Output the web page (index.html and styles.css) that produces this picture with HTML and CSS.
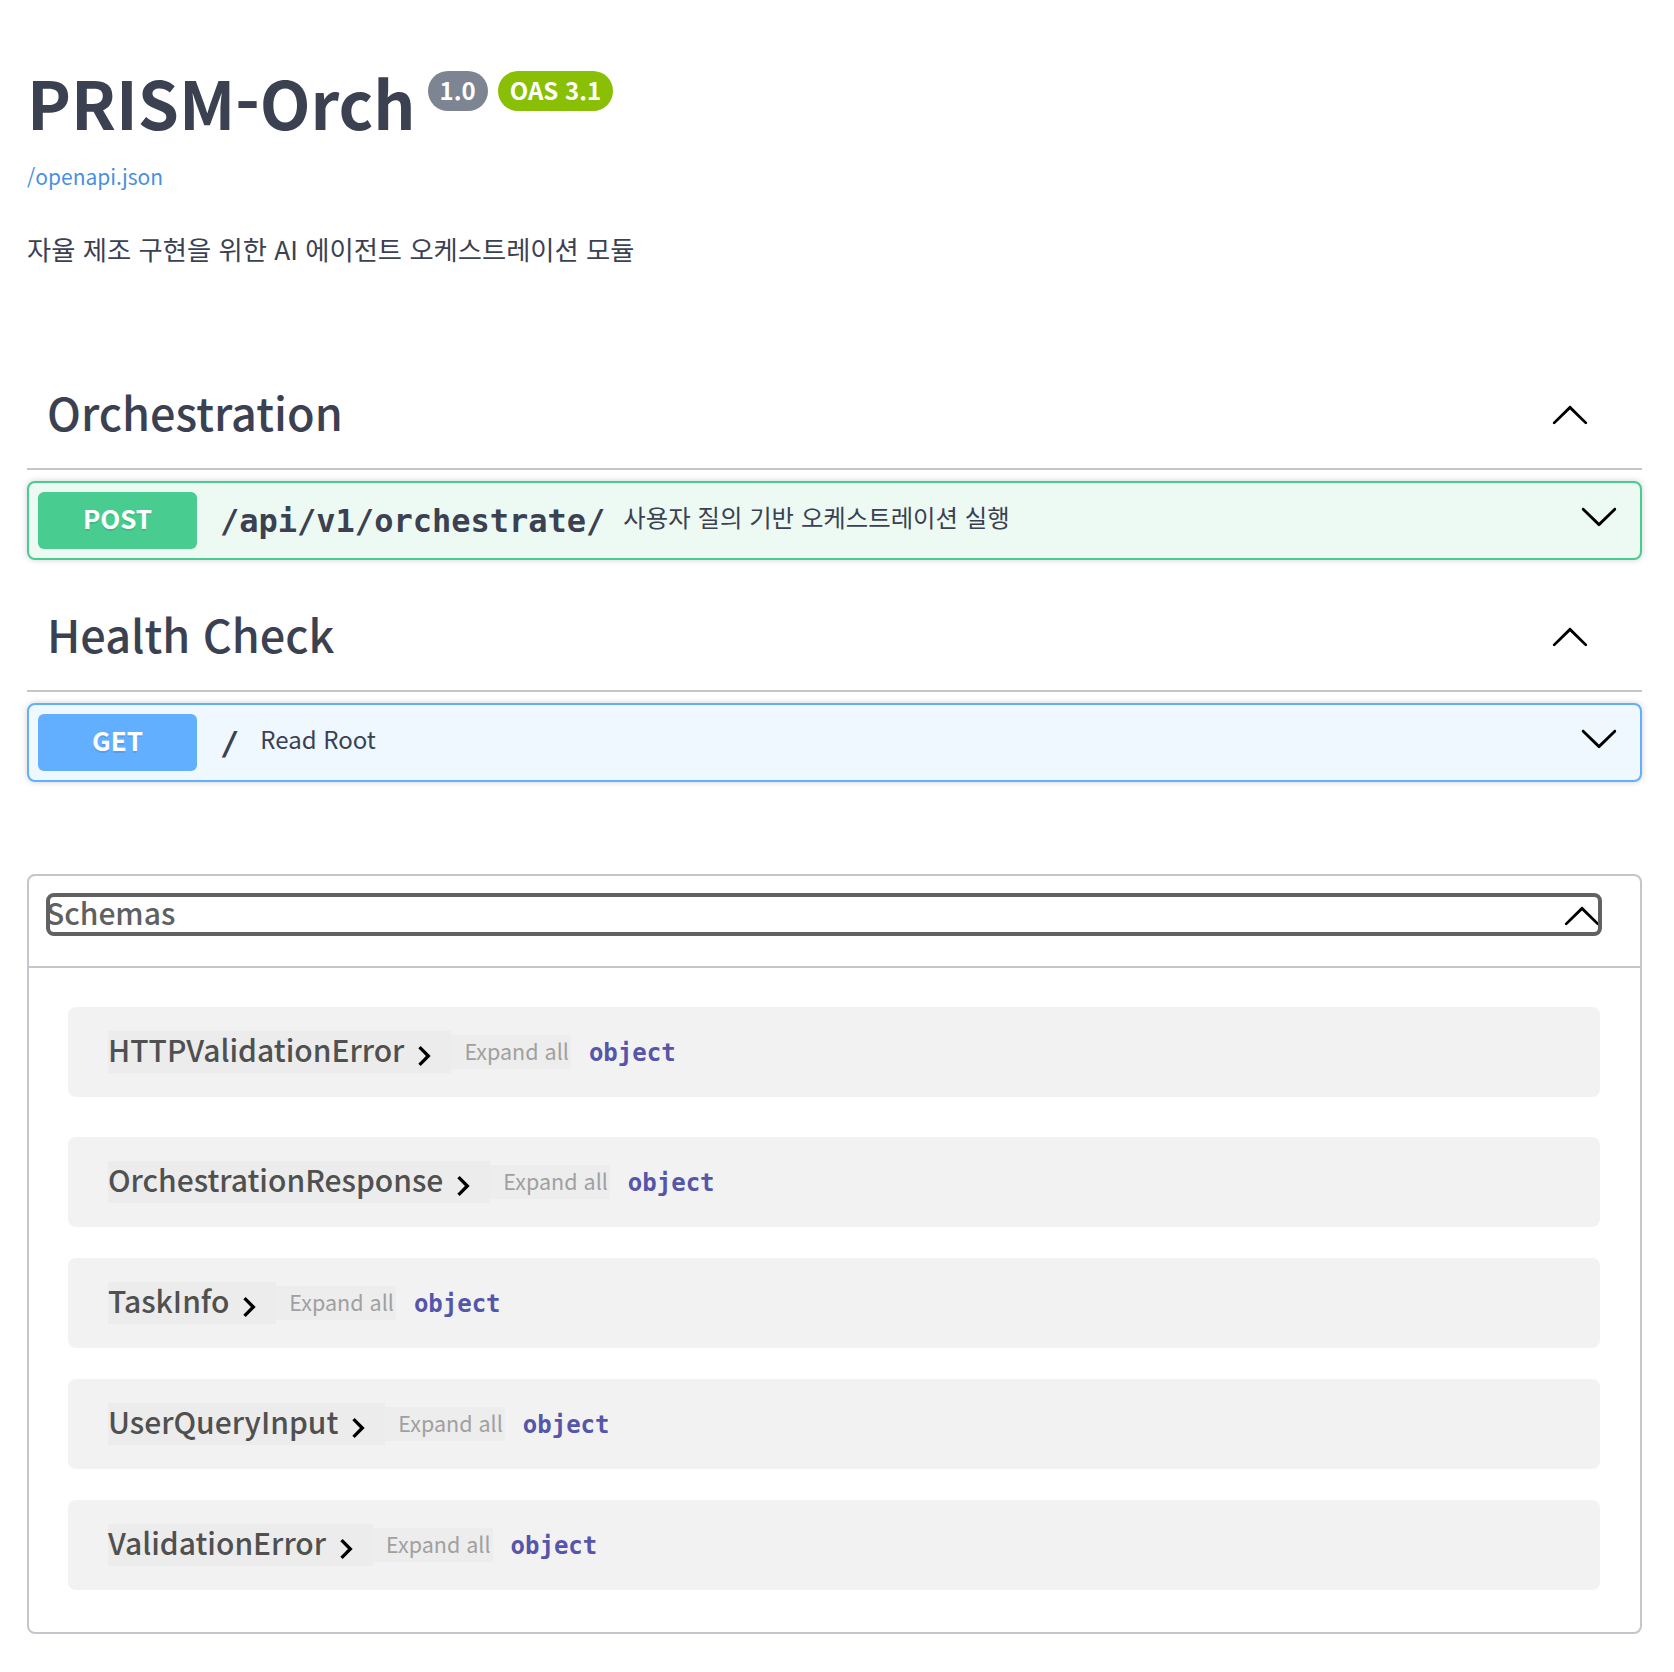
FILE: index.html
```html
<!DOCTYPE html>
<html lang="ko">
<head>
<meta charset="utf-8">
<title>PRISM-Orch</title>
<link rel="stylesheet" href="styles.css">
</head>
<body>
<div class="page">
  <section class="info">
    <div class="title-row">
      <h1 class="title">PRISM-Orch</h1>
      <span class="badge badge-version">1.0</span>
      <span class="badge badge-oas">OAS 3.1</span>
    </div>
    <a class="spec-link" href="#">/openapi.json</a>
    <p class="description">자율 제조 구현을 위한 AI 에이전트 오케스트레이션 모듈</p>
  </section>

  <div class="tags">
    <section class="tag-section">
      <div class="tag-header">
        <h3 class="tag-name">Orchestration</h3>
        <svg class="arrow" viewBox="0 0 20 20" width="40" height="40"><path d="M17.418 14.908c.272.268.709.268.979 0s.271-.701 0-.969l-7.908-7.83c-.27-.268-.707-.268-.979 0l-7.908 7.83c-.27.268-.27.701 0 .969.271.268.709.268.979 0L10 7.767l7.418 7.141z"/></svg>
      </div>
      <div class="opblock opblock-post">
        <span class="method method-post">POST</span>
        <span class="path">/api/v1/orchestrate/</span>
        <span class="summary summary-ko">사용자 질의 기반 오케스트레이션 실행</span>
        <svg class="arrow" viewBox="0 0 20 20" width="40" height="40"><path d="M17.418 6.109c.272-.268.709-.268.979 0s.271.701 0 .969l-7.908 7.83c-.27.268-.707.268-.979 0l-7.908-7.830c-.27-.268-.27-.701 0-.969.271-.268.709-.268.979 0L10 13.25l7.418-7.141z"/></svg>
      </div>
    </section>

    <section class="tag-section">
      <div class="tag-header">
        <h3 class="tag-name">Health Check</h3>
        <svg class="arrow" viewBox="0 0 20 20" width="40" height="40"><path d="M17.418 14.908c.272.268.709.268.979 0s.271-.701 0-.969l-7.908-7.83c-.27-.268-.707-.268-.979 0l-7.908 7.83c-.27.268-.27.701 0 .969.271.268.709.268.979 0L10 7.767l7.418 7.141z"/></svg>
      </div>
      <div class="opblock opblock-get">
        <span class="method method-get">GET</span>
        <span class="path">/</span>
        <span class="summary">Read Root</span>
        <svg class="arrow" viewBox="0 0 20 20" width="40" height="40"><path d="M17.418 6.109c.272-.268.709-.268.979 0s.271.701 0 .969l-7.908 7.83c-.27.268-.707.268-.979 0l-7.908-7.830c-.27-.268-.27-.701 0-.969.271-.268.709-.268.979 0L10 13.25l7.418-7.141z"/></svg>
      </div>
    </section>
  </div>

  <section class="models">
    <div class="models-header">
      <button class="models-toggle" type="button">
        <span class="models-label">Schemas</span>
        <svg class="arrow" viewBox="0 0 20 20" width="40" height="40"><path d="M17.418 14.908c.272.268.709.268.979 0s.271-.701 0-.969l-7.908-7.83c-.27-.268-.707-.268-.979 0l-7.908 7.83c-.27.268-.27.701 0 .969.271.268.709.268.979 0L10 7.767l7.418 7.141z"/></svg>
      </button>
    </div>
    <div class="models-list">
      <div class="model-box">
        <span class="model-title-btn"><span class="model-title">HTTPValidationError</span><svg class="model-toggle" viewBox="0 0 24 24" width="40" height="40"><path d="M10 6 8.59 7.41 13.17 12l-4.58 4.59L10 18l6-6z"/></svg></span>
        <span class="expand-btn">Expand all</span>
        <span class="prop-type">object</span>
      </div>
      <div class="model-box">
        <span class="model-title-btn"><span class="model-title">OrchestrationResponse</span><svg class="model-toggle" viewBox="0 0 24 24" width="40" height="40"><path d="M10 6 8.59 7.41 13.17 12l-4.58 4.59L10 18l6-6z"/></svg></span>
        <span class="expand-btn">Expand all</span>
        <span class="prop-type">object</span>
      </div>
      <div class="model-box">
        <span class="model-title-btn"><span class="model-title">TaskInfo</span><svg class="model-toggle" viewBox="0 0 24 24" width="40" height="40"><path d="M10 6 8.59 7.41 13.17 12l-4.58 4.59L10 18l6-6z"/></svg></span>
        <span class="expand-btn">Expand all</span>
        <span class="prop-type">object</span>
      </div>
      <div class="model-box">
        <span class="model-title-btn"><span class="model-title">UserQueryInput</span><svg class="model-toggle" viewBox="0 0 24 24" width="40" height="40"><path d="M10 6 8.59 7.41 13.17 12l-4.58 4.59L10 18l6-6z"/></svg></span>
        <span class="expand-btn">Expand all</span>
        <span class="prop-type">object</span>
      </div>
      <div class="model-box">
        <span class="model-title-btn"><span class="model-title">ValidationError</span><svg class="model-toggle" viewBox="0 0 24 24" width="40" height="40"><path d="M10 6 8.59 7.41 13.17 12l-4.58 4.59L10 18l6-6z"/></svg></span>
        <span class="expand-btn">Expand all</span>
        <span class="prop-type">object</span>
      </div>
    </div>
  </section>
</div>
</body>
</html>
```

FILE: styles.css
```css
* { box-sizing: border-box; }

html, body {
  margin: 0;
  padding: 0;
  background: #fff;
}

body {
  font-family: "Noto Sans CJK KR", "Noto Sans", sans-serif;
  color: #3b4151;
}

.page {
  padding: 0 32px 38px 27px;
}

/* ---------- info ---------- */
.info {
  padding-top: 62px;
}

.title-row {
  display: flex;
  align-items: flex-start;
}

.title {
  margin: 0;
  font-size: 66px;
  line-height: 79px;
  font-weight: 700;
  color: #3b4151;
}

.badge {
  margin-top: 9px;
  height: 40px;
  line-height: 38px;
  padding: 0 12px;
  border-radius: 40px;
  color: #fff;
  font-size: 24px;
  font-weight: 700;
}

.badge-version {
  background: #7d8492;
  margin-left: 12px;
}

.badge-oas {
  background: #89bf04;
  margin-left: 10px;
}

.spec-link {
  display: block;
  margin-top: 20px;
  font-size: 21px;
  line-height: 30px;
  color: #4990e2;
  text-decoration: none;
}

.description {
  margin: 40px 0 0;
  font-size: 26.3px;
  line-height: 36px;
  color: #3b4151;
}

/* ---------- tags ---------- */
.tags {
  margin-top: 93px;
}

.tag-section + .tag-section {
  margin-top: 22px;
}

.tag-header {
  display: flex;
  align-items: center;
  justify-content: space-between;
  height: 110px;
  padding: 0 52px 0 20px;
  border-bottom: 2px solid #c4c6cb;
}

.tag-name {
  margin: 0 0 6px;
  font-size: 45px;
  font-weight: 500;
  color: #3b4151;
}

.arrow {
  display: block;
  flex: none;
  fill: #000;
}

.opblock {
  display: flex;
  align-items: center;
  height: 79px;
  margin-top: 11px;
  padding: 0 9px;
  border: 2px solid;
  border-radius: 8px;
  box-shadow: 0 0 6px rgba(0, 0, 0, 0.19);
}

.opblock-post {
  border-color: #49cc90;
  background: #edfaf4;
}

.opblock-get {
  border-color: #61affe;
  background: #eff7ff;
}

.method {
  flex: none;
  display: flex;
  align-items: center;
  justify-content: center;
  width: 159px;
  height: 57px;
  padding-bottom: 7px;
  border-radius: 6px;
  color: #fff;
  font-size: 26px;
  font-weight: 700;
  text-shadow: 0 2px 0 rgba(0, 0, 0, 0.1);
}

.method-post { background: #49cc90; }
.method-get { background: #61affe; }

.path {
  margin-left: 23px;
  font-family: "DejaVu Sans Mono", monospace;
  font-weight: 700;
  font-size: 32px;
  color: #3b4151;
}

.summary {
  margin: 0 0 8px 21px;
  font-size: 24px;
  color: #3b4151;
}

.summary-ko {
  margin-left: 18px;
  font-size: 24.4px;
}

.opblock .arrow {
  margin-left: auto;
  margin-right: 12px;
  margin-top: -9px;
}

/* ---------- models ---------- */
.models {
  margin-top: 92px;
  border: 2px solid #c4c6cb;
  border-radius: 8px;
}

.models-header {
  padding: 17px 38px 30px 17px;
  border-bottom: 2px solid #c4c6cb;
}

.models-toggle {
  display: flex;
  align-items: center;
  justify-content: space-between;
  width: 100%;
  height: 43px;
  padding: 0;
  border: 0;
  background: none;
  outline: 4px solid #616161;
  outline-offset: -4px;
  border-radius: 8px;
  font-family: inherit;
  font-size: 30px;
  font-weight: 500;
  color: #606060;
}

.models-label {
  padding-bottom: 6px;
}

.models-list {
  padding-top: 39px;
  padding-bottom: 42px;
}

.model-box {
  display: flex;
  align-items: center;
  height: 90px;
  margin: 0 40px 31px 39px;
  padding-left: 40px;
  background: #f2f2f2;
  border-radius: 8px;
}

.model-box:first-child {
  margin-bottom: 40px;
}

.model-box:last-child {
  margin-bottom: 0;
}

.model-title-btn {
  display: flex;
  align-items: center;
  height: 42px;
  padding-right: 7px;
  background: rgba(0, 0, 0, 0.025);
}

.model-title {
  padding-bottom: 6px;
  font-size: 30px;
  font-weight: 500;
  color: #505050;
}

.model-toggle {
  display: block;
  margin-top: 8px;
  fill: #000;
}

.expand-btn {
  height: 34px;
  line-height: 32px;
  padding: 0 2px 0 13px;
  font-size: 21.5px;
  color: #a0a0a0;
  background: rgba(0, 0, 0, 0.02);
}

.prop-type {
  margin-left: 18px;
  margin-top: 2px;
  font-family: "DejaVu Sans Mono", monospace;
  font-weight: 700;
  font-size: 24px;
  color: #55a;
}
```
